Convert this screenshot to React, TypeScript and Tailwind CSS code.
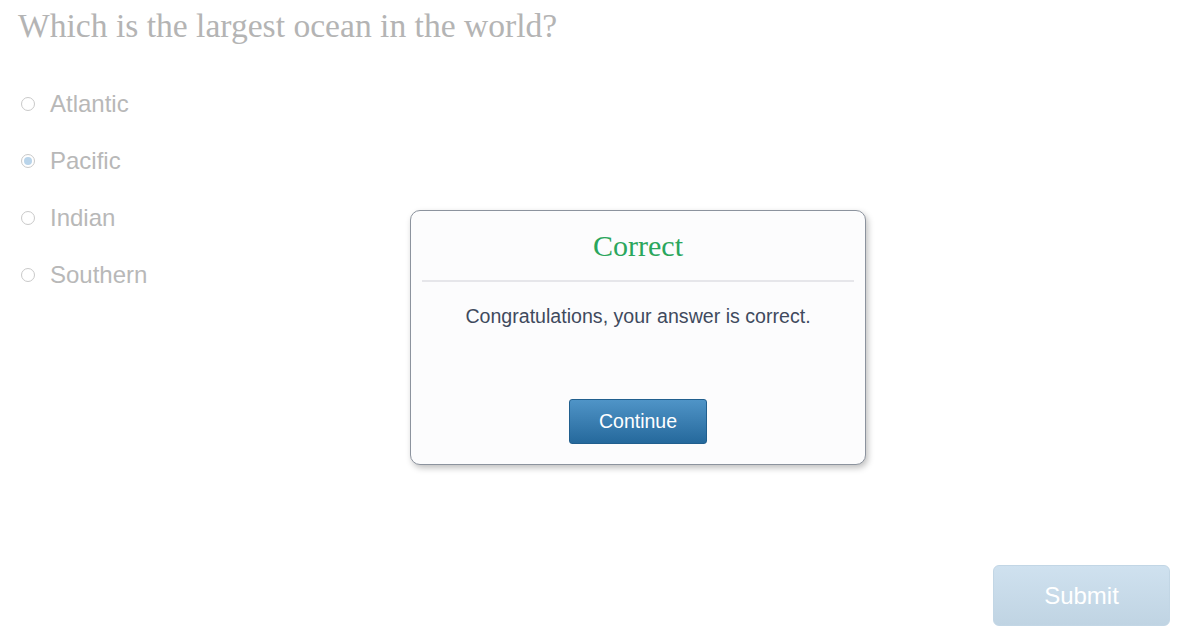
import { useState } from "react";

const options = ["Atlantic", "Pacific", "Indian", "Southern"];

function Radio({ checked }: { checked: boolean }) {
  return (
    <span className="flex h-[14px] w-[14px] items-center justify-center rounded-full border border-[#c9c9c9] bg-white">
      {checked && <span className="h-[8px] w-[8px] rounded-full bg-[#b9d4ea]" />}
    </span>
  );
}

export default function App() {
  const [selected, setSelected] = useState("Pacific");

  return (
    <div className="relative flex h-[631px] w-[1180px] flex-col bg-white font-['Liberation_Sans',Arial,sans-serif]">
      <h1 className="pl-[18px] pt-[6px] font-['Liberation_Serif','Times_New_Roman',serif] text-[33.6px] leading-[40px] text-[#b4b4b4]">
        Which is the largest ocean in the world?
      </h1>

      {/* Options */}
      <div className="mt-[30px] flex flex-col">
        {options.map((o) => (
          <label
            key={o}
            onClick={() => setSelected(o)}
            className="flex h-[56.8px] cursor-pointer items-center gap-[15px] pl-[21px]"
          >
            <Radio checked={selected === o} />
            <span className="text-[24px] text-[#b8b8b8]">{o}</span>
          </label>
        ))}
      </div>

      {/* Submit */}
      <div className="mt-auto flex justify-end pb-[5px] pr-[10px]">
        <button className="h-[61px] w-[177px] rounded-[6px] border border-[#c2d6e5] bg-gradient-to-b from-[#cfe1ef] to-[#c0d4e3] text-[24px] text-white">
          Submit
        </button>
      </div>

      {/* Feedback dialog */}
      <div className="absolute left-[410px] top-[210px] flex h-[255px] w-[456px] flex-col items-center rounded-[10px] border border-[#8c939e] bg-[#fcfcfd] px-[11px] shadow-[2px_3px_6px_rgba(0,0,0,0.25)]">
        <div className="flex h-[71px] w-full items-center justify-center border-b-2 border-[#e6e6ea]">
          <h2 className="font-['Liberation_Serif','Times_New_Roman',serif] text-[30px] leading-none text-[#2aa65c]">
            Correct
          </h2>
        </div>
        <p className="mt-[22px] text-[19.6px] leading-[24px] text-[#3f4a5d]">
          Congratulations, your answer is correct.
        </p>
        <button className="mt-[71px] h-[45px] w-[138px] rounded-[3px] border border-[#215f8e] bg-gradient-to-b from-[#4f94c7] to-[#25699c] text-[19.5px] text-white">
          Continue
        </button>
      </div>
    </div>
  );
}
